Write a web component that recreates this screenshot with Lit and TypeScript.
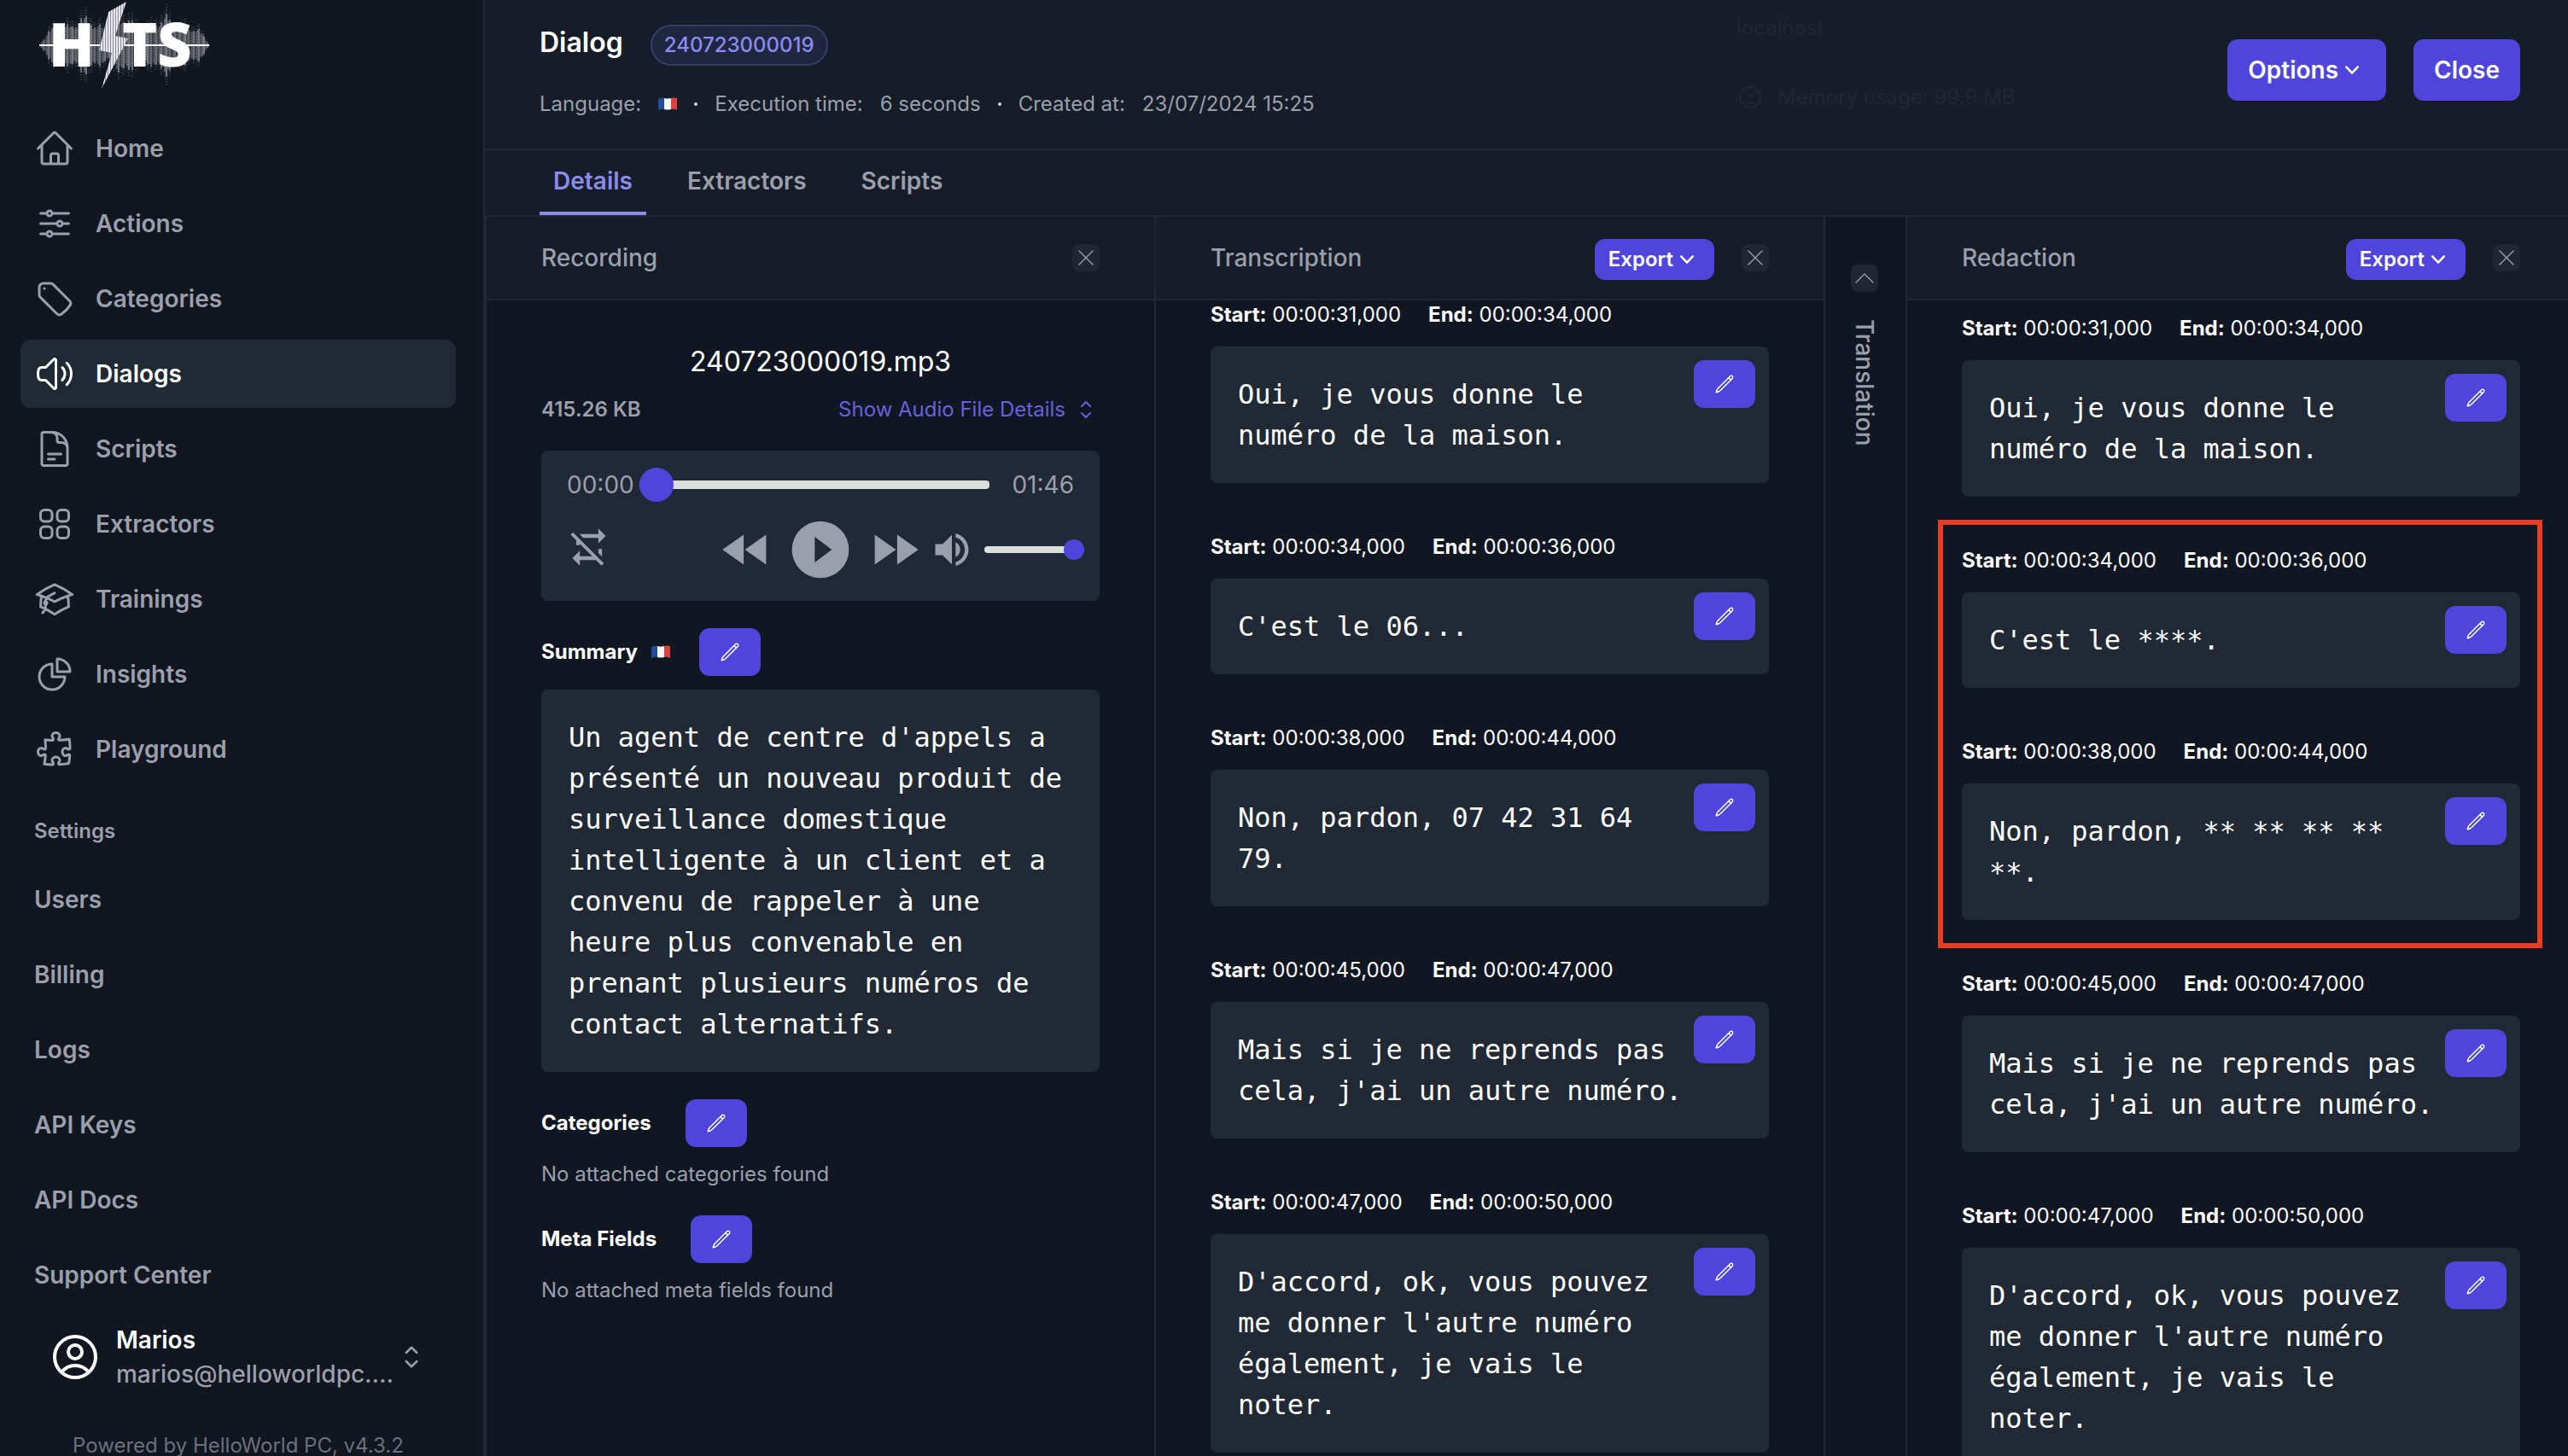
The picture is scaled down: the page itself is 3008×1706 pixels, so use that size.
import { LitElement, html, svg, css, nothing } from "lit";
import { customElement, state } from "lit/decorators.js";
import { classMap } from "lit/directives/class-map.js";

/* ---------- icon paths (24-unit grid, stroked) ---------- */
const ICONS: Record<string, string> = {
  home: "m2.25 12 8.954-8.955c.44-.439 1.152-.439 1.591 0L21.75 12M4.5 9.75v10.125c0 .621.504 1.125 1.125 1.125H9.75v-4.875c0-.621.504-1.125 1.125-1.125h2.25c.621 0 1.125.504 1.125 1.125V21h4.125c.621 0 1.125-.504 1.125-1.125V9.75M8.25 21h8.25",
  sliders:
    "M10.5 6h9.75M10.5 6a1.5 1.5 0 1 1-3 0m3 0a1.5 1.5 0 1 0-3 0M3.75 6H7.5m3 12h9.75m-9.75 0a1.5 1.5 0 0 1-3 0m3 0a1.5 1.5 0 0 0-3 0m-3.75 0H7.5m9-6h3.75m-3.75 0a1.5 1.5 0 0 1-3 0m3 0a1.5 1.5 0 0 0-3 0m-9.75 0h9.75",
  tag: "M9.568 3H5.25A2.25 2.25 0 0 0 3 5.25v4.318c0 .597.237 1.17.659 1.591l9.581 9.581c.699.699 1.78.872 2.607.33a18.095 18.095 0 0 0 5.223-5.223c.542-.827.369-1.908-.33-2.607L11.16 3.66A2.25 2.25 0 0 0 9.568 3ZM6 6h.008v.008H6V6Z",
  speaker:
    "M19.114 5.636a9 9 0 0 1 0 12.728M16.463 8.288a5.25 5.25 0 0 1 0 7.424M6.75 8.25l4.72-4.72a.75.75 0 0 1 1.28.53v15.88a.75.75 0 0 1-1.28.53l-4.72-4.72H4.51c-.88 0-1.704-.507-1.938-1.354A9.009 9.009 0 0 1 2.25 12c0-.83.112-1.633.322-2.396C2.806 8.756 3.63 8.25 4.51 8.25H6.75Z",
  document:
    "M19.5 14.25v-2.625a3.375 3.375 0 0 0-3.375-3.375h-1.5A1.125 1.125 0 0 1 13.5 7.125v-1.5a3.375 3.375 0 0 0-3.375-3.375H8.25m0 12.75h7.5m-7.5 3H12M10.5 2.25H5.625c-.621 0-1.125.504-1.125 1.125v17.25c0 .621.504 1.125 1.125 1.125h12.75c.621 0 1.125-.504 1.125-1.125V11.25a9 9 0 0 0-9-9Z",
  squares:
    "M3.75 6A2.25 2.25 0 0 1 6 3.75h2.25A2.25 2.25 0 0 1 10.5 6v2.25a2.25 2.25 0 0 1-2.25 2.25H6a2.25 2.25 0 0 1-2.25-2.25V6ZM3.75 15.75A2.25 2.25 0 0 1 6 13.5h2.25a2.25 2.25 0 0 1 2.25 2.25V18a2.25 2.25 0 0 1-2.25 2.25H6A2.25 2.25 0 0 1 3.75 18v-2.25ZM13.5 6a2.25 2.25 0 0 1 2.25-2.25H18A2.25 2.25 0 0 1 20.25 6v2.25A2.25 2.25 0 0 1 18 10.5h-2.25a2.25 2.25 0 0 1-2.25-2.25V6ZM13.5 15.75a2.25 2.25 0 0 1 2.25-2.25H18a2.25 2.25 0 0 1 2.25 2.25V18A2.25 2.25 0 0 1 18 20.25h-2.25A2.25 2.25 0 0 1 13.5 18v-2.25Z",
  cap: "M4.26 10.147a60.438 60.438 0 0 0-.491 6.347A48.62 48.62 0 0 1 12 20.904a48.62 48.62 0 0 1 8.232-4.41 60.46 60.46 0 0 0-.491-6.347m-15.482 0a50.636 50.636 0 0 0-2.658-.813A59.906 59.906 0 0 1 12 3.493a59.903 59.903 0 0 1 10.399 5.84c-.896.248-1.783.52-2.658.814m-15.482 0A50.717 50.717 0 0 1 12 13.489a50.702 50.702 0 0 1 7.74-3.342M6.75 15a.75.75 0 1 0 0-1.5.75.75 0 0 0 0 1.5Zm0 0v-3.675A55.378 55.378 0 0 1 12 8.443m-7.007 11.55A5.981 5.981 0 0 0 6.75 15.75v-1.5",
  pie: "M10.5 6a7.5 7.5 0 1 0 7.5 7.5h-7.5V6ZM13.5 10.5H21A7.5 7.5 0 0 0 13.5 3v7.5Z",
  puzzle:
    "M14.25 6.087c0-.355.186-.676.401-.959.221-.29.349-.634.349-1.003 0-1.036-1.007-1.875-2.25-1.875s-2.25.84-2.25 1.875c0 .369.128.713.349 1.003.215.283.401.604.401.959v0a.64.64 0 0 1-.657.643 48.39 48.39 0 0 1-4.163-.3c.186 1.613.293 3.25.315 4.907a.656.656 0 0 1-.658.663v0c-.355 0-.676-.186-.959-.401a1.647 1.647 0 0 0-1.003-.349c-1.036 0-1.875 1.007-1.875 2.25s.84 2.25 1.875 2.25c.369 0 .713-.128 1.003-.349.283-.215.604-.401.959-.401v0c.31 0 .555.26.532.57a48.039 48.039 0 0 1-.642 5.056c1.518.19 3.058.309 4.616.354a.64.64 0 0 0 .657-.643v0c0-.355-.186-.676-.401-.959a1.647 1.647 0 0 1-.349-1.003c0-1.035 1.008-1.875 2.25-1.875 1.243 0 2.25.84 2.25 1.875 0 .369-.128.713-.349 1.003-.215.283-.4.604-.4.959v0c0 .333.277.599.61.58a48.1 48.1 0 0 0 5.427-.63 48.05 48.05 0 0 0 .582-4.717.532.532 0 0 0-.533-.57v0c-.355 0-.676.186-.959.401-.29.221-.634.349-1.003.349-1.035 0-1.875-1.007-1.875-2.25s.84-2.25 1.875-2.25c.37 0 .713.128 1.003.349.283.215.604.401.96.401v0a.656.656 0 0 0 .658-.663 48.422 48.422 0 0 0-.37-5.36c-1.886.342-3.81.574-5.766.689a.578.578 0 0 1-.61-.58v0Z",
  user: "M17.982 18.725A7.488 7.488 0 0 0 12 15.75a7.488 7.488 0 0 0-5.982 2.975m11.963 0a9 9 0 1 0-11.963 0m11.963 0A8.966 8.966 0 0 1 12 21a8.966 8.966 0 0 1-5.982-2.275M15 9.75a3 3 0 1 1-6 0 3 3 0 0 1 6 0Z",
  upDown: "M8.25 15 12 18.75 15.75 15m-7.5-6L12 5.25 15.75 9",
  close: "M6 18 18 6M6 6l12 12",
  up: "m4.5 15.75 7.5-7.5 7.5 7.5",
  pencil:
    "m16.862 4.487 1.687-1.688a1.875 1.875 0 1 1 2.652 2.652L6.832 19.82a4.5 4.5 0 0 1-1.897 1.13l-2.685.8.8-2.685a4.5 4.5 0 0 1 1.13-1.897L16.863 4.487Zm0 0L19.5 7.125",
  gauge: "M12 12l4-5M12 3a9 9 0 1 0 0 18 9 9 0 0 0 0-18ZM9 17h6",
};

/* ---------- player glyphs (24-unit grid, filled) ---------- */
const GLYPHS: Record<string, string> = {
  repeatOff:
    "M2 5.27 3.28 4 20 20.72 18.73 22l-3-3H7v3l-4-4 4-4v3h6.73L7 10.27V11H5V8.27L2 5.27M17 13h2v4.18l-2-2V13m0-8V2l4 4-4 4V7H8.82l-2-2H17Z",
  rewind: "M11.5 12 20 18V6M11 18V6l-8.5 6 8.5 6Z",
  play: "M10 16.5v-9l6 4.5M12 2A10 10 0 0 0 2 12a10 10 0 0 0 10 10 10 10 0 0 0 10-10A10 10 0 0 0 12 2Z",
  forward: "M13 6v12l8.5-6M4 18l8.5-6L4 6v12Z",
  volume:
    "M14 3.23v2.06c2.89.86 5 3.54 5 6.71s-2.11 5.84-5 6.7v2.07c4-.91 7-4.49 7-8.77s-3-7.86-7-8.77M16.5 12c0-1.77-1-3.29-2.5-4.03V16c1.5-.71 2.5-2.24 2.5-4M3 9v6h4l5 5V4L7 9H3Z",
};

const icon = (name: string, size = "") => html`<svg
  class="icon ${size}"
  viewBox="0 0 24 24"
  aria-hidden="true"
>
  <path d=${ICONS[name]}></path>
</svg>`;

const glyph = (name: string, size: string) => html`<svg
  class="glyph ${size}"
  viewBox="0 0 24 24"
  aria-hidden="true"
>
  <path fill-rule="evenodd" d=${GLYPHS[name]}></path>
</svg>`;

const caret = html`<svg class="caret" viewBox="0 0 20 20" aria-hidden="true">
  <path
    fill-rule="evenodd"
    d="M5.23 7.21a.75.75 0 0 1 1.06.02L10 11.168l3.71-3.938a.75.75 0 1 1 1.08 1.04l-4.25 4.5a.75.75 0 0 1-1.08 0l-4.25-4.5a.75.75 0 0 1 .02-1.06Z"
  ></path>
</svg>`;

const flag = html`<svg class="flag" viewBox="0 0 22 16" role="img" aria-label="French">
  <path fill="#1f4f9c" d="M0 2q4-2 8-1v13q-4-1-8 1Z"></path>
  <path fill="#f4f6f8" d="M7 1q4 1 8 0v13q-4 1-8 0Z"></path>
  <path fill="#d8433b" d="M15 1q3-1 7 0v14q-4-2-7-1Z"></path>
</svg>`;

/* Sound-wave bars behind the wordmark: [x, half height, opacity]. */
const WAVE: Array<[number, number, number]> = Array.from({ length: 100 }, (_, i) => {
  const x = 7 + i * 2;
  const edge = Math.min(1, Math.min(x - 6, 206 - x) / 22);
  const swell = 0.55 + 0.3 * Math.sin(x / 7.5) + 0.25 * Math.cos(x / 3.1);
  const jitter = ((i * 37) % 11) / 11;
  return [x, Math.max(1, edge * (14 + 22 * swell * (0.5 + jitter * 0.5))), 0.35 + jitter * 0.6];
});

const logo = html`<svg class="logo" viewBox="0 0 210 110" role="img" aria-label="HTS">
  <defs>
    <pattern id="stripes" width="3" height="8" patternUnits="userSpaceOnUse">
      <rect width="3" height="8" fill="#8d8f9c"></rect>
      <rect width="2" height="8" fill="#e6e6ec"></rect>
    </pattern>
  </defs>
  ${WAVE.map(
    ([x, h, o]) => svg`
      <path d="M${x} ${53 - h}V${53 + h}" stroke="#fff" stroke-width="1" opacity=${o * 0.85}></path>
      <path d="M${x} ${53 - h * 1.3}V${53 + h * 1.3}" stroke="#fff" stroke-width="1"
        stroke-dasharray="1 2" opacity=${o * 0.5}></path>`
  )}
  <path d="M6 53H205" stroke="#fff" stroke-width="2"></path>
  <path d="M85 14 108 3 95 42 110 45 79 104 91 62 76 59Z" fill="#111621" opacity=".7"></path>
  <path d="M87 14 108 2 95 42 110 45 79 104 91 62 76 59Z" fill="url(#stripes)"></path>
  <text class="wordmark" y="78"><tspan x="17">H</tspan><tspan x="103">TS</tspan></text>
</svg>`;

interface Segment {
  start: string;
  end: string;
  text: string;
  redacted?: string;
}

const SEGMENTS: Segment[] = [
  { start: "00:00:31,000", end: "00:00:34,000", text: "Oui, je vous donne le numéro de la maison." },
  { start: "00:00:34,000", end: "00:00:36,000", text: "C'est le 06...", redacted: "C'est le ****." },
  {
    start: "00:00:38,000",
    end: "00:00:44,000",
    text: "Non, pardon, 07 42 31 64 79.",
    redacted: "Non, pardon, ** ** ** ** **.",
  },
  { start: "00:00:45,000", end: "00:00:47,000", text: "Mais si je ne reprends pas cela, j'ai un autre numéro." },
  {
    start: "00:00:47,000",
    end: "00:00:50,000",
    text: "D'accord, ok, vous pouvez me donner l'autre numéro également, je vais le noter.",
  },
];

const MAIN_NAV: Array<[string, string]> = [
  ["Home", "home"],
  ["Actions", "sliders"],
  ["Categories", "tag"],
  ["Dialogs", "speaker"],
  ["Scripts", "document"],
  ["Extractors", "squares"],
  ["Trainings", "cap"],
  ["Insights", "pie"],
  ["Playground", "puzzle"],
];

const SETTINGS_NAV = ["Users", "Billing", "Logs", "API Keys", "API Docs", "Support Center"];

const SUMMARY =
  "Un agent de centre d'appels a présenté un nouveau produit de surveillance domestique intelligente à un client et a convenu de rappeler à une heure plus convenable en prenant plusieurs numéros de contact alternatifs.";

@customElement("app-root")
export class AppRoot extends LitElement {
  @state() private tab = "Details";

  static styles = css`
    :host {
      --side: #111621;
      --bar: #161d29;
      --body: #101723;
      --card: #202934;
      --line: #212834;
      --muted: #9b9fab;
      --accent: #4f45dc;
      --accent-text: #8b8bf0;
      display: block;
      font-family: Inter, "Liberation Sans", sans-serif;
      font-size: 24px;
      line-height: 32px;
      color: #fff;
    }
    *,
    *::before,
    *::after {
      box-sizing: border-box;
    }
    h1,
    h2,
    h3,
    p,
    ul,
    dl,
    dd {
      margin: 0;
      padding: 0;
      font: inherit;
    }
    a {
      color: inherit;
      text-decoration: none;
    }
    button {
      font: inherit;
      color: inherit;
      background: none;
      border: 0;
      padding: 0;
      cursor: pointer;
    }
    .icon {
      flex: none;
      width: 32px;
      height: 32px;
      fill: none;
      stroke: currentColor;
      stroke-width: 1.5;
      stroke-linecap: round;
      stroke-linejoin: round;
      display: block;
    }
    .icon.s24 {
      width: 24px;
      height: 24px;
    }
    .icon.s40 {
      width: 40px;
      height: 40px;
    }
    .icon.s48 {
      width: 48px;
      height: 48px;
    }
    .icon.s64 {
      width: 64px;
      height: 64px;
    }
    .glyph {
      flex: none;
      display: block;
      fill: currentColor;
    }
    .g52 {
      width: 52px;
      height: 52px;
    }
    .g70 {
      width: 70px;
      height: 70px;
    }
    .g80 {
      width: 80px;
      height: 80px;
    }
    .caret {
      width: 32px;
      height: 32px;
      fill: currentColor;
      display: block;
    }
    .flag {
      width: 22px;
      height: 16px;
      display: block;
    }

    .shell {
      display: grid;
      grid-template-columns: 568px minmax(0, 1fr);
      height: 100vh;
      overflow: hidden;
      background: var(--body);
    }

    /* sidebar */
    .side {
      background: var(--side);
      border-right: 2px solid var(--line);
      padding: 0 32px 0 24px;
      overflow: hidden;
      color: var(--muted);
    }
    .logo {
      display: block;
      width: 210px;
      height: 110px;
      margin: 0 0 24px 16px;
    }
    .wordmark {
      font-family: "Open Sans", "Noto Sans", sans-serif;
      font-weight: 800;
      font-size: 70px;
      fill: #fff;
    }
    .nav {
      display: grid;
      gap: 8px;
      font-size: 28px;
      font-weight: 600;
    }
    .nav a {
      display: flex;
      align-items: center;
      gap: 24px;
      height: 80px;
      padding: 0 16px;
      border-radius: 12px;
    }
    .nav a.on {
      background: var(--card);
      color: #fff;
    }
    .group {
      margin: 36px 0 20px;
      padding: 0 16px;
      line-height: 40px;
      font-weight: 600;
    }
    .account {
      display: flex;
      align-items: center;
      gap: 16px;
      width: 100%;
      margin: 16px 0 48px;
      padding: 0 32px;
      text-align: left;
      font-size: 28px;
      line-height: 40px;
      font-weight: 500;
      color: var(--muted);
    }
    .account .icon.s64 {
      color: #fff;
    }
    .who {
      flex: 1;
      min-width: 0;
    }
    .who b {
      display: block;
      color: #fff;
      font-weight: 600;
    }
    .powered {
      text-align: center;
      color: #6b707c;
    }

    /* main header */
    .main {
      display: flex;
      flex-direction: column;
      min-width: 0;
      min-height: 0;
    }
    .head {
      position: relative;
      display: flex;
      justify-content: space-between;
      align-items: flex-start;
      height: 176px;
      padding: 29px 56px 0 64px;
      background: var(--bar);
      border-bottom: 2px solid var(--line);
    }
    .title {
      display: flex;
      align-items: flex-start;
      gap: 32px;
    }
    .title h1 {
      font-size: 32px;
      line-height: 42px;
      font-weight: 600;
    }
    .pill {
      height: 48px;
      padding: 0 14px;
      line-height: 44px;
      border: 2px solid #363c66;
      border-radius: 24px;
      background: #1f2640;
      color: var(--accent-text);
      font-weight: 500;
    }
    .meta {
      display: flex;
      align-items: center;
      gap: 20px;
      margin-top: 29px;
      color: var(--muted);
    }
    .dot {
      width: 4px;
      height: 4px;
      border-radius: 50%;
      background: #d1d5db;
    }
    .actions {
      display: flex;
      gap: 32px;
      margin-top: 17px;
    }
    .btn {
      display: flex;
      align-items: center;
      height: 72px;
      padding: 0 24px;
      border-radius: 12px;
      background: var(--accent);
      color: #fff;
      font-size: 28px;
      font-weight: 600;
    }
    .btn.small {
      height: 48px;
      margin-top: 4px;
      padding: 0 16px;
      font-size: 24px;
    }
    .ghost {
      position: absolute;
      left: 1434px;
      top: 0;
      width: 486px;
      height: 160px;
      padding: 17px 32px;
      background: #171e2a;
      color: #202733;
      border-radius: 0 0 12px 12px;
      pointer-events: none;
    }
    .ghost p + p {
      display: flex;
      align-items: center;
      gap: 16px;
      margin-top: 49px;
    }
    .tabs {
      display: flex;
      gap: 32px;
      height: 78px;
      padding: 0 64px;
      background: var(--bar);
      border-bottom: 2px solid var(--line);
      flex: none;
    }
    .tabs button {
      padding: 0 16px;
      border-bottom: 4px solid transparent;
      font-size: 28px;
      font-weight: 600;
      line-height: 40px;
      color: var(--muted);
    }
    .tabs button.on {
      color: var(--accent-text);
      border-color: var(--accent-text);
    }

    /* columns */
    .columns {
      flex: 1;
      min-height: 0;
      display: grid;
      grid-template-columns: minmax(0, 1fr) minmax(0, 1fr) 96px minmax(0, 1fr);
      margin-right: -8px;
    }
    .col {
      min-height: 0;
      overflow: hidden;
      border-left: 2px solid var(--line);
    }
    .col-head {
      display: flex;
      align-items: center;
      gap: 32px;
      height: 98px;
      padding: 0 64px;
      background: var(--bar);
      border-bottom: 2px solid var(--line);
    }
    .col-head h2 {
      flex: 1;
      font-size: 28px;
      font-weight: 500;
      color: var(--muted);
    }
    .mini {
      width: 32px;
      height: 32px;
      border-radius: 8px;
      background: #202632;
      color: var(--muted);
    }
    .mini .icon {
      stroke-width: 1;
    }
    .narrow {
      display: flex;
      flex-direction: column;
      align-items: center;
      gap: 32px;
      padding: 56px 2px 0 0;
    }
    .narrow h2 {
      writing-mode: vertical-rl;
      font-size: 28px;
      font-weight: 500;
      color: var(--muted);
    }

    /* recording */
    .recording {
      padding: 48px 64px;
    }
    .file {
      text-align: center;
      font-size: 32px;
      line-height: 48px;
      font-weight: 400;
    }
    .size {
      display: flex;
      justify-content: space-between;
      align-items: center;
      height: 32px;
      margin: 16px 0 32px;
      color: var(--muted);
      font-weight: 600;
    }
    .size button {
      display: flex;
      align-items: center;
      gap: 8px;
      color: #6a60dc;
      font-weight: 400;
    }
    .player {
      display: grid;
      gap: 16px;
      padding: 20px 30px;
      border-radius: 8px;
      background: #212938;
      color: var(--muted);
      font-size: 28px;
    }
    .seek {
      display: flex;
      align-items: center;
      height: 40px;
    }
    .seek input {
      margin: 0 26px 0 6px;
    }
    .controls {
      display: grid;
      grid-template-columns: minmax(0, 1fr) auto minmax(0, 1fr);
      align-items: center;
    }
    .transport {
      display: flex;
      align-items: center;
      gap: 12px;
    }
    .volume {
      display: flex;
      align-items: center;
      gap: 12px;
      padding-left: 6px;
      margin-right: -12px;
    }
    input[type="range"] {
      --thumb: 40px;
      --track: 10px;
      appearance: none;
      flex: 1;
      min-width: 0;
      height: var(--thumb);
      padding: 0;
      background: none;
    }
    .volume input[type="range"] {
      --thumb: 24px;
      --track: 8px;
      margin: 0;
    }
    input[type="range"]::-webkit-slider-runnable-track {
      height: var(--track);
      border-radius: 4px;
      background: #dadfdc;
    }
    input[type="range"]::-webkit-slider-thumb {
      appearance: none;
      width: var(--thumb);
      height: var(--thumb);
      margin-top: calc((var(--track) - var(--thumb)) / 2);
      border-radius: 50%;
      background: var(--accent);
    }
    .field {
      display: flex;
      align-items: center;
      gap: 40px;
      height: 56px;
      margin-top: 32px;
    }
    .field h3 {
      font-weight: 700;
    }
    .field .flag {
      margin: 0 -6px 0 -24px;
    }
    .edit {
      flex: none;
      display: grid;
      place-items: center;
      width: 72px;
      height: 56px;
      border-radius: 12px;
      background: var(--accent);
      color: #fff;
    }
    .note {
      margin-top: 16px;
      color: var(--muted);
    }
    .card {
      border-radius: 8px;
      background: var(--card);
      font-family: "DejaVu Sans Mono", monospace;
      font-size: 32px;
      line-height: 48px;
    }
    .summary {
      margin-top: 16px;
      padding: 32px;
    }

    /* segments */
    .segments {
      display: grid;
      gap: 58px;
      padding: 0 64px;
    }
    .segments.inset {
      padding-top: 16px;
    }
    .times {
      display: flex;
      gap: 32px;
      margin-bottom: 20px;
      line-height: 34px;
      font-weight: 400;
    }
    .times b {
      font-weight: 700;
    }
    .line {
      display: flex;
      align-items: flex-start;
      gap: 8px;
      padding: 16px 16px 32px 32px;
    }
    .line p {
      flex: 1;
      min-width: 0;
      padding-top: 16px;
    }
    .marked {
      position: relative;
      display: grid;
      gap: 58px;
    }
    .marked::after {
      content: "";
      position: absolute;
      inset: -31px -26px -33px -28px;
      border: 6px solid #ea3d24;
      pointer-events: none;
    }
  `;

  private edit(label: string) {
    return html`<button class="edit" aria-label="Edit ${label}">${icon("pencil", "s24")}</button>`;
  }

  private segment(s: Segment, redacted: boolean) {
    return html`<article>
      <div class="times">
        <span><b>Start:</b> ${s.start}</span>
        <span><b>End:</b> ${s.end}</span>
      </div>
      <div class="card line">
        <p>${redacted ? s.redacted ?? s.text : s.text}</p>
        ${this.edit(`segment ${s.start}`)}
      </div>
    </article>`;
  }

  private columnHead(title: string, exportable: boolean) {
    return html`<header class="col-head">
      <h2>${title}</h2>
      ${exportable ? html`<button class="btn small">Export ${caret}</button>` : nothing}
      <button class="mini" aria-label="Close ${title}">${icon("close")}</button>
    </header>`;
  }

  private sidebar() {
    return html`<aside class="side">
      ${logo}
      <nav class="nav" aria-label="Main">
        ${MAIN_NAV.map(
          ([label, name]) => html`<a href="#${label.toLowerCase()}" class=${classMap({ on: label === "Dialogs" })}
            >${icon(name, "s48")}<span>${label}</span></a
          >`
        )}
      </nav>
      <h2 class="group">Settings</h2>
      <nav class="nav" aria-label="Settings">
        ${SETTINGS_NAV.map((label) => html`<a href="#${label.toLowerCase().replace(" ", "-")}">${label}</a>`)}
      </nav>
      <button class="account">
        ${icon("user", "s64")}
        <span class="who"><b>Marios</b>marios@helloworldpc....</span>
        ${icon("upDown", "s40")}
      </button>
      <p class="powered">Powered by HelloWorld PC, v4.3.2</p>
    </aside>`;
  }

  private recording() {
    return html`<section class="col">
      ${this.columnHead("Recording", false)}
      <div class="recording">
        <p class="file">240723000019.mp3</p>
        <div class="size">
          <span>415.26 KB</span>
          <button>Show Audio File Details ${icon("upDown")}</button>
        </div>
        <div class="player">
          <div class="seek">
            <span>00:00</span>
            <input type="range" min="0" max="106" value="0" aria-label="Position" />
            <span>01:46</span>
          </div>
          <div class="controls">
            <div><button aria-label="Enable loop">${glyph("repeatOff", "g52")}</button></div>
            <div class="transport">
              <button aria-label="Rewind">${glyph("rewind", "g70")}</button>
              <button aria-label="Play">${glyph("play", "g80")}</button>
              <button aria-label="Forward">${glyph("forward", "g70")}</button>
            </div>
            <div class="volume">
              <button aria-label="Mute">${glyph("volume", "g52")}</button>
              <input type="range" min="0" max="100" value="100" aria-label="Volume" />
            </div>
          </div>
        </div>
        <div class="field">
          <h3>Summary</h3>
          ${flag} ${this.edit("summary")}
        </div>
        <p class="card summary">${SUMMARY}</p>
        <div class="field">
          <h3>Categories</h3>
          ${this.edit("categories")}
        </div>
        <p class="note">No attached categories found</p>
        <div class="field">
          <h3>Meta Fields</h3>
          ${this.edit("meta fields")}
        </div>
        <p class="note">No attached meta fields found</p>
      </div>
    </section>`;
  }

  render() {
    const [first, second, third, ...rest] = SEGMENTS;
    return html`<div class="shell">
      ${this.sidebar()}
      <main class="main">
        <header class="head">
          <div>
            <div class="title">
              <h1>Dialog</h1>
              <span class="pill">240723000019</span>
            </div>
            <div class="meta">
              <span>Language:</span>${flag}<i class="dot"></i> <span>Execution time:</span><span>6 seconds</span
              ><i class="dot"></i> <span>Created at:</span><span>23/07/2024 15:25</span>
            </div>
          </div>
          <div class="ghost">
            <p>localhost</p>
            <p>${icon("gauge")}Memory usage: 99.9 MB</p>
          </div>
          <div class="actions">
            <button class="btn">Options ${caret}</button>
            <button class="btn">Close</button>
          </div>
        </header>
        <div class="tabs" role="tablist">
          ${["Details", "Extractors", "Scripts"].map(
            (t) => html`<button
              role="tab"
              aria-selected=${t === this.tab}
              class=${classMap({ on: t === this.tab })}
              @click=${() => (this.tab = t)}
            >
              ${t}
            </button>`
          )}
        </div>
        <div class="columns">
          ${this.recording()}
          <section class="col">
            ${this.columnHead("Transcription", true)}
            <div class="segments">${SEGMENTS.map((s) => this.segment(s, false))}</div>
          </section>
          <section class="col narrow">
            <button class="mini" aria-label="Expand Translation">${icon("up")}</button>
            <h2>Translation</h2>
          </section>
          <section class="col">
            ${this.columnHead("Redaction", true)}
            <div class="segments inset">
              ${this.segment(first, true)}
              <div class="marked">${this.segment(second, true)}${this.segment(third, true)}</div>
              ${rest.map((s) => this.segment(s, true))}
            </div>
          </section>
        </div>
      </main>
    </div>`;
  }
}
